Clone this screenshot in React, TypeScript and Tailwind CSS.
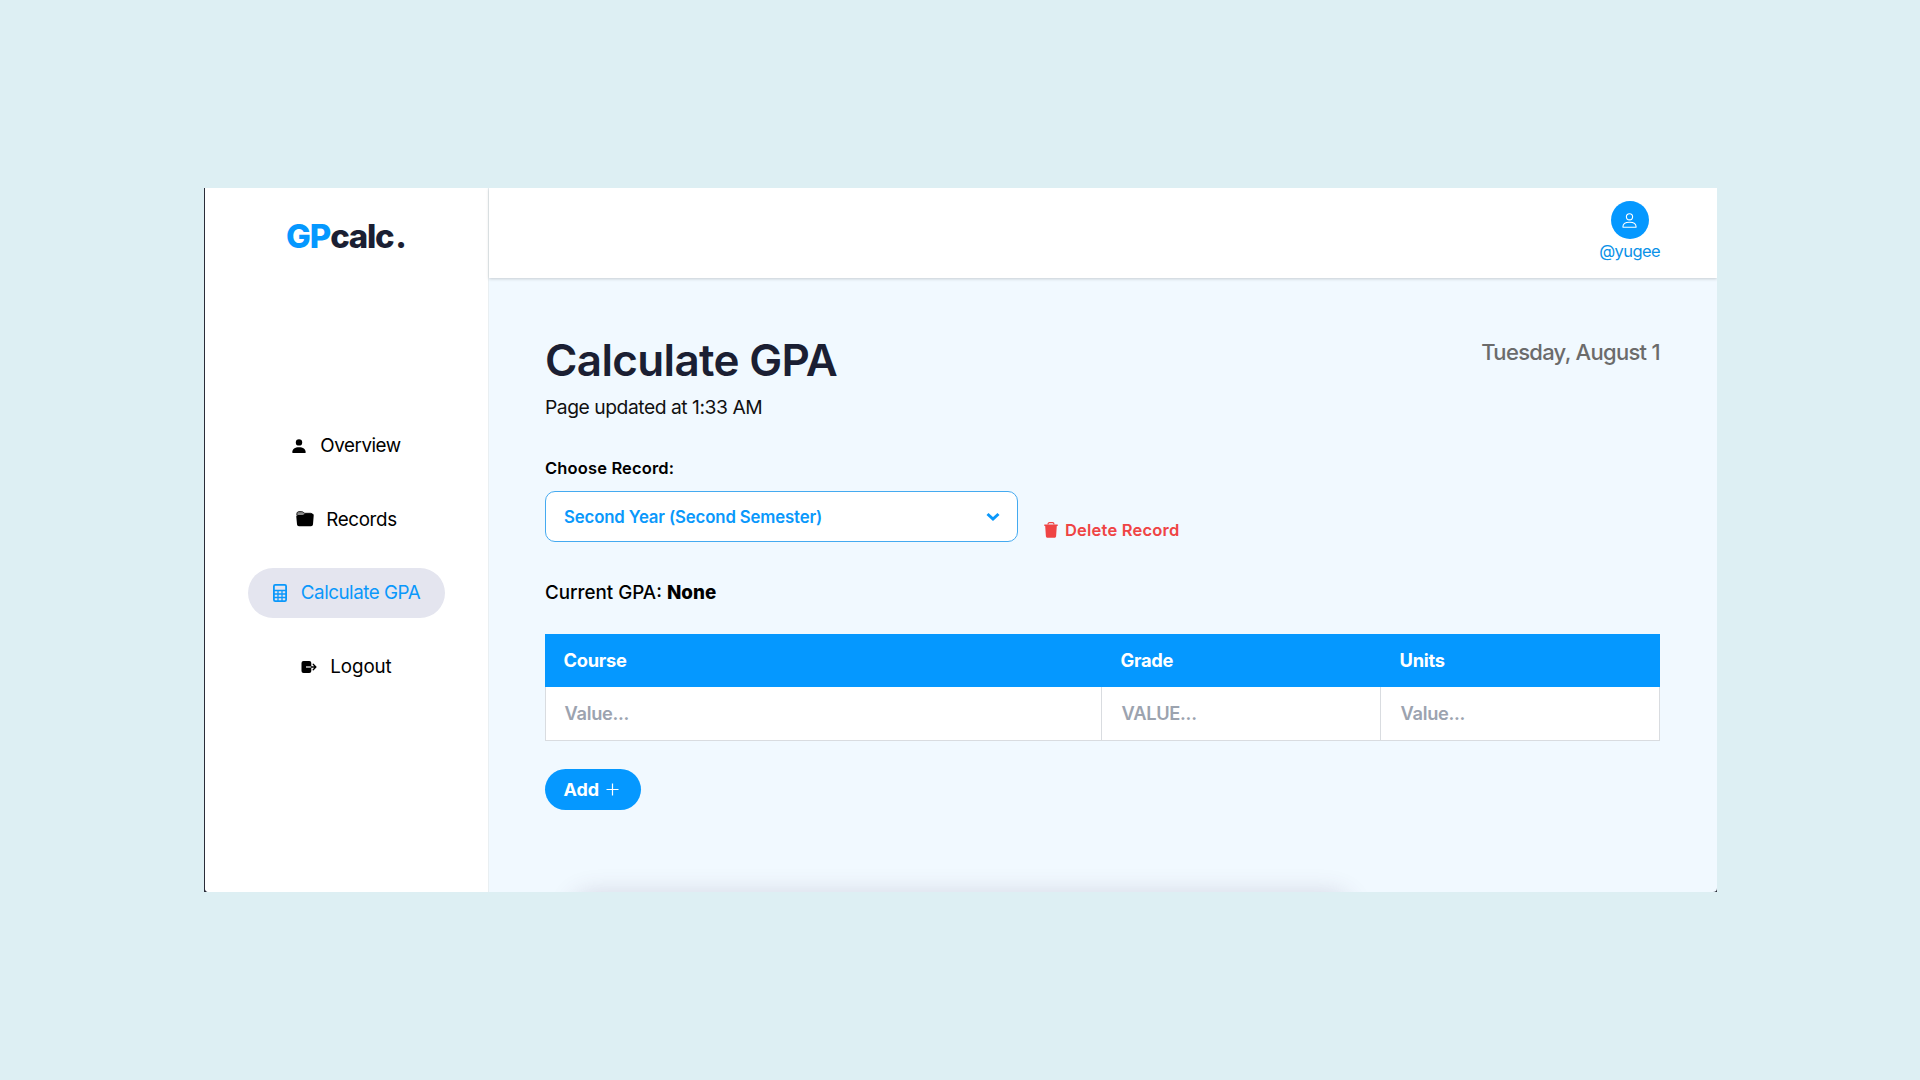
import type { ReactNode } from "react";

function PersonFill() {
  return (
    <svg className="h-[14px] w-[14px] shrink-0" viewBox="0 0 14 14" fill="currentColor">
      <circle cx="7" cy="3.4" r="3.2" />
      <path d="M0.3 13.4C0.2 10 3 8.2 7 8.2s6.8 1.8 6.7 5.2c0 .3-.2.5-.5.5H.8c-.3 0-.5-.2-.5-.5Z" />
    </svg>
  );
}

function FolderFill() {
  return (
    <svg className="h-[16px] w-[18px] shrink-0" viewBox="0 0 18 16" fill="currentColor">
      <path d="M.9 4.2V2.6C.9 1.5 1.7.7 2.8.7h3c.6 0 1 .2 1.5.6l.7.6c.4.3.7.4 1.2.4h5.3c1.1 0 1.9.7 1.9 1.8" fill="#8a8a8a" stroke="currentColor" strokeWidth="0.9" />
      <path d="M1.9 3.9h4.600c.5 0 .9-.2 1.3-.5l.7-.5c.4-.3.8-.4 1.3-.4h6c1.2 0 2 .9 1.900 2l-.7 8.800c-.1 1.200-.9 1.900-2 1.900H3c-1.100 0-1.900-.7-2-1.900L.3 5.700c-.1-1 .6-1.800 1.600-1.800Z" />
    </svg>
  );
}

function CalculatorIcon() {
  return (
    <svg className="h-[18px] w-[14px] shrink-0" viewBox="0 0 14 18">
      <rect x="0.9" y="0.9" width="12.2" height="16.2" rx="1.3" fill="none" stroke="currentColor" strokeWidth="1.8" />
      <path d="M1 6.5h12M1 10h12M1 13.5h12M5 6.5V17M9 6.5V17" stroke="currentColor" strokeWidth="1.3" fill="none" />
    </svg>
  );
}

function LogoutIcon() {
  return (
    <svg className="h-[14px] w-[16px] shrink-0" viewBox="0 0 16 14">
      <rect x="0.5" y="1" width="9.8" height="12" rx="2" fill="currentColor" />
      <path d="M5 7h5.3" stroke="#fff" strokeWidth="1.2" />
      <path d="M10.3 7h4.4M12.2 4.3 14.9 7l-2.7 2.7" stroke="currentColor" strokeWidth="1.3" fill="none" strokeLinecap="round" strokeLinejoin="round" />
    </svg>
  );
}

function TrashIcon() {
  return (
    <svg className="h-[16px] w-[14px]" viewBox="0 0 14 16" fill="currentColor">
      <path d="M4 2.5C4 1.3 4.600.7 5.500.7h3c.9 0 1.500.6 1.500 1.800" fill="none" stroke="currentColor" strokeWidth="1.2" />
      <path d="M.3 2.500h13.400v1.400H.3zM1.200 4h11.600l-.7 10.300c-.1.900-.7 1.500-1.600 1.500h-7c-.9 0-1.500-.6-1.600-1.500z" />
    </svg>
  );
}

function NavItem({ icon, gap, tracking, active, label }: { icon: ReactNode; gap: string; tracking: string; active?: boolean; label: string }) {
  return (
    <a className={`flex h-[50px] items-center rounded-full px-[25px] text-[18.8px] leading-none ${gap} ${active ? "bg-[#e4e5ef] text-[#0a98fb]" : "text-black"}`}>
      {icon}
      <span className={`pt-[2px] ${tracking}`}>{label}</span>
    </a>
  );
}

const headers = ["Course", "Grade", "Units"];
const placeholders = ["Value...", "VALUE...", "Value..."];

export default function App() {
  return (
    <div className="flex h-[1080px] w-[1920px] flex-col bg-[#ddeff3] pt-[188px] pl-[204px] font-['Inter',sans-serif]">
      <div className="h-[704px] w-[1513px] bg-[#2a2c38] pl-px">
        <div className="relative flex h-[704px] w-[1512px] overflow-hidden rounded-b-[4px] bg-[#f1f9ff]">
          <aside className="flex w-[284px] shrink-0 flex-col items-center border-r border-[#e9eff2] bg-white pt-[28px]">
            <div className="flex h-[40px] items-center text-[33px] leading-none font-extrabold text-[#1b1f33]">
              <span className="tracking-[-1.1px] text-[#0598ff]">GP</span>
              <span className="tracking-[-1.3px]">calc</span>
              <span className="ml-[2px]">.</span>
            </div>
            <nav className="mt-[164.5px] flex flex-col items-center gap-[23.7px]">
              <NavItem icon={<PersonFill />} gap="gap-[14px]" tracking="tracking-[-0.45px]" label="Overview" />
              <NavItem icon={<FolderFill />} gap="gap-[12px]" tracking="tracking-[-0.35px]" label="Records" />
              <NavItem icon={<CalculatorIcon />} gap="gap-[14px]" tracking="tracking-[-0.48px]" label="Calculate GPA" active />
              <NavItem icon={<LogoutIcon />} gap="gap-[13px]" tracking="tracking-[-0.1px]" label="Logout" />
            </nav>
          </aside>
          <div className="flex flex-1 flex-col">
            <header className="flex h-[90px] shrink-0 justify-end bg-white pt-[13px] pr-[57px] shadow-[0_1px_3px_rgba(0,0,0,0.18)]">
              <div className="flex flex-col items-center">
                <div className="flex size-[38px] items-center justify-center rounded-full bg-[#0598ff]">
                  <svg className="h-[15px] w-[15px]" viewBox="0 0 15 15" fill="none" stroke="#fff" strokeWidth="1.1">
                    <circle cx="7.5" cy="3.8" r="3.1" />
                    <path d="M.9 14C.9 10.900 3.400 9.300 7.500 9.300s6.600 1.600 6.600 4.700c0 .2-.1.300-.3.300H1.200c-.2 0-.3-.1-.3-.3Z" />
                  </svg>
                </div>
                <div className="mt-[2px] text-[16.5px] leading-[20px] tracking-[-0.6px] text-[#0a92e8]">@yugee</div>
              </div>
            </header>
            <main className="flex flex-col pr-[57px] pl-[56px]">
              <div className="flex items-start justify-between pt-[52px]">
                <h1 className="text-[44px] leading-[60px] font-semibold tracking-[-0.65px] text-[#1b1f33]">Calculate GPA</h1>
                <div className="pt-[9px] text-[22px] leading-[26px] font-medium tracking-[-0.7px] text-[#6b6b6b]">Tuesday, August 1</div>
              </div>
              <p className="h-[34px] text-[19.3px] leading-[34px] tracking-[-0.47px] text-[#111]">Page updated at 1:33 AM</p>
              <div className="mt-[33px] h-[22px] text-[16.5px] leading-[22px] font-semibold tracking-[0.15px] text-black">Choose Record:</div>
              <div className="mt-[12px] flex h-[51px] items-end">
                <div className="flex h-[51px] w-[473px] items-center justify-between rounded-[10px] border-[1.5px] border-[#45aaf0] bg-white pr-[17px] pl-[18px] text-[16.8px] leading-none font-semibold text-[#0a98fb]">
                  <span className="pt-[2px] tracking-[-0.15px]">Second Year (Second Semester)</span>
                  <svg className="h-[10px] w-[14px]" viewBox="0 0 14 10" fill="none" stroke="currentColor" strokeWidth="3"><path d="m1.5 2 5.500 5 5.500-5" /></svg>
                </div>
                <div className="mb-[1px] ml-[26px] flex h-[22px] items-center gap-[7px] text-[16.5px] leading-none font-semibold tracking-[0.2px] text-[#ef4444]">
                  <TrashIcon />
                  <span>Delete Record</span>
                </div>
              </div>
              <div className="mt-[37px] flex h-[28px] items-center text-[18.8px] leading-none font-medium text-black">
                <span>Current GPA:</span>
                <span className="ml-[5px] font-extrabold tracking-[0.1px]">None</span>
              </div>
              <div className="mt-[27px] grid w-[1115px] grid-cols-[557px_279px_279px]">
                {headers.map((h) => (
                  <div key={h} className="flex h-[53px] items-center bg-[#0598ff] pl-[18.5px] text-[18.3px] leading-none font-bold tracking-[-0.25px] text-white">{h}</div>
                ))}
                {placeholders.map((v, i) => (
                  <div key={i} className="flex h-[54px] items-center border-r border-b border-[#d9dce0] bg-white pl-[19.5px] text-[18.3px] leading-none font-semibold tracking-[-0.3px] text-[#9ca3af] first:border-l nth-[4]:border-l nth-[4]:pl-[18.5px]">{v}</div>
                ))}
              </div>
              <button className="mt-[28px] flex h-[41px] w-[96px] items-center gap-[7px] rounded-full bg-[#0598ff] pl-[18.5px] text-[18px] leading-none font-bold text-white">
                <span>Add</span>
                <svg className="size-[13px]" viewBox="0 0 13 13" stroke="#fff" strokeWidth="1.2"><path d="M6.5.5v12M.5 6.5h12" /></svg>
              </button>
            </main>
          </div>
          <div className="absolute top-[714px] left-[376px] h-[20px] w-[760px] rounded-full shadow-[0_0_26px_8px_rgba(80,60,100,0.2)]" />
        </div>
      </div>
    </div>
  );
}
